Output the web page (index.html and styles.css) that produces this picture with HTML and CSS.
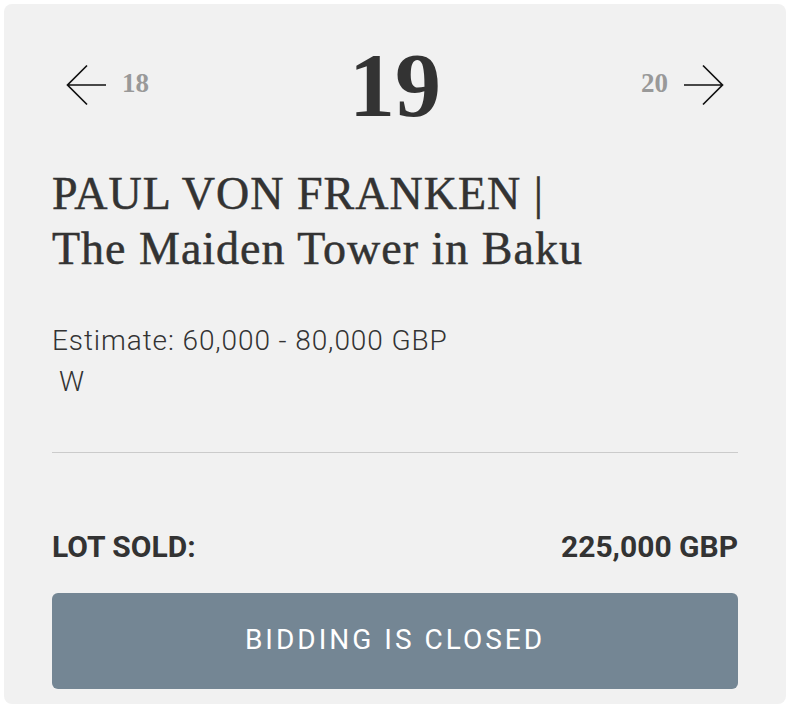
FILE: index.html
```html
<!DOCTYPE html>
<html lang="en">
<head>
    <meta charset="UTF-8">
    <meta name="viewport" content="width=device-width, initial-scale=1.0">
    <title>Lot 19</title>
    <link rel="stylesheet" href="styles.css">
</head>
<body>
    <div class="lot-card">
        <div class="lot-nav">
            <a class="nav-link prev" href="#">
                <svg class="arrow" width="40" height="42" viewBox="0 0 40 42"><path d="M40 21H1.5M21 1.5L1.5 21L21 40.5"/></svg>
                <span class="nav-num">18</span>
            </a>
            <div class="lot-number">19</div>
            <a class="nav-link next" href="#">
                <span class="nav-num">20</span>
                <svg class="arrow" width="40" height="42" viewBox="0 0 40 42"><path d="M0 21H38.5M19 1.5L38.5 21L19 40.5"/></svg>
            </a>
        </div>
        <h1 class="lot-title">PAUL VON FRANKEN |<br>The Maiden Tower in Baku</h1>
        <div class="lot-info">
            <div>Estimate: 60,000 - 80,000 GBP</div>
            <div class="lot-mark">W</div>
        </div>
        <hr class="divider">
        <div class="sold-row">
            <span>LOT SOLD:</span>
            <span>225,000 GBP</span>
        </div>
        <div class="closed-btn">BIDDING IS CLOSED</div>
    </div>
</body>
</html>
```

FILE: styles.css
```css
body {
    margin: 0;
    padding: 4px;
    background: #fff;
    font-family: Roboto, "Liberation Sans", sans-serif;
    color: #333;
}
.lot-card {
    width: 782px;
    box-sizing: border-box;
    background: #f1f1f1;
    border-radius: 8px;
    padding: 41px 48px 15px;
}
.lot-nav {
    display: grid;
    grid-template-columns: 1fr auto 1fr;
    align-items: center;
    height: 80px;
    padding: 0 14px;
}
.nav-link {
    display: flex;
    align-items: center;
    gap: 16px;
    text-decoration: none;
}
.nav-link.next {
    justify-self: end;
}
.arrow {
    display: block;
    fill: none;
    stroke: #111;
    stroke-width: 1.7;
}
.nav-num {
    font-family: "Liberation Serif", serif;
    font-weight: bold;
    font-size: 27px;
    color: #999;
    margin-top: -3px;
}
.lot-number {
    font-family: "Liberation Serif", serif;
    font-weight: bold;
    font-size: 92px;
    line-height: 80px;
    color: #333;
}
.lot-title {
    margin: 41px 0 0;
    font-family: "Liberation Serif", serif;
    font-weight: normal;
    font-size: 46px;
    line-height: 55px;
    letter-spacing: 1px;
    color: #333;
    -webkit-text-stroke: 0.5px #333;
}
.lot-info {
    margin-top: 44px;
    font-size: 28px;
    font-weight: 300;
    line-height: 41px;
    letter-spacing: 0.9px;
}
.lot-mark {
    padding-left: 7px;
}
.divider {
    margin: 50px 0 0;
    border: 0;
    border-top: 1px solid #cbcbcb;
}
.sold-row {
    display: flex;
    justify-content: space-between;
    margin-top: 77px;
    font-size: 30px;
    font-weight: bold;
    line-height: 34px;
}
.closed-btn {
    margin-top: 29px;
    height: 96px;
    box-sizing: border-box;
    padding-bottom: 4px;
    display: flex;
    justify-content: center;
    align-items: center;
    background: #748694;
    border-radius: 6px;
    color: #fff;
    font-size: 28px;
    letter-spacing: 3px;
}
```
